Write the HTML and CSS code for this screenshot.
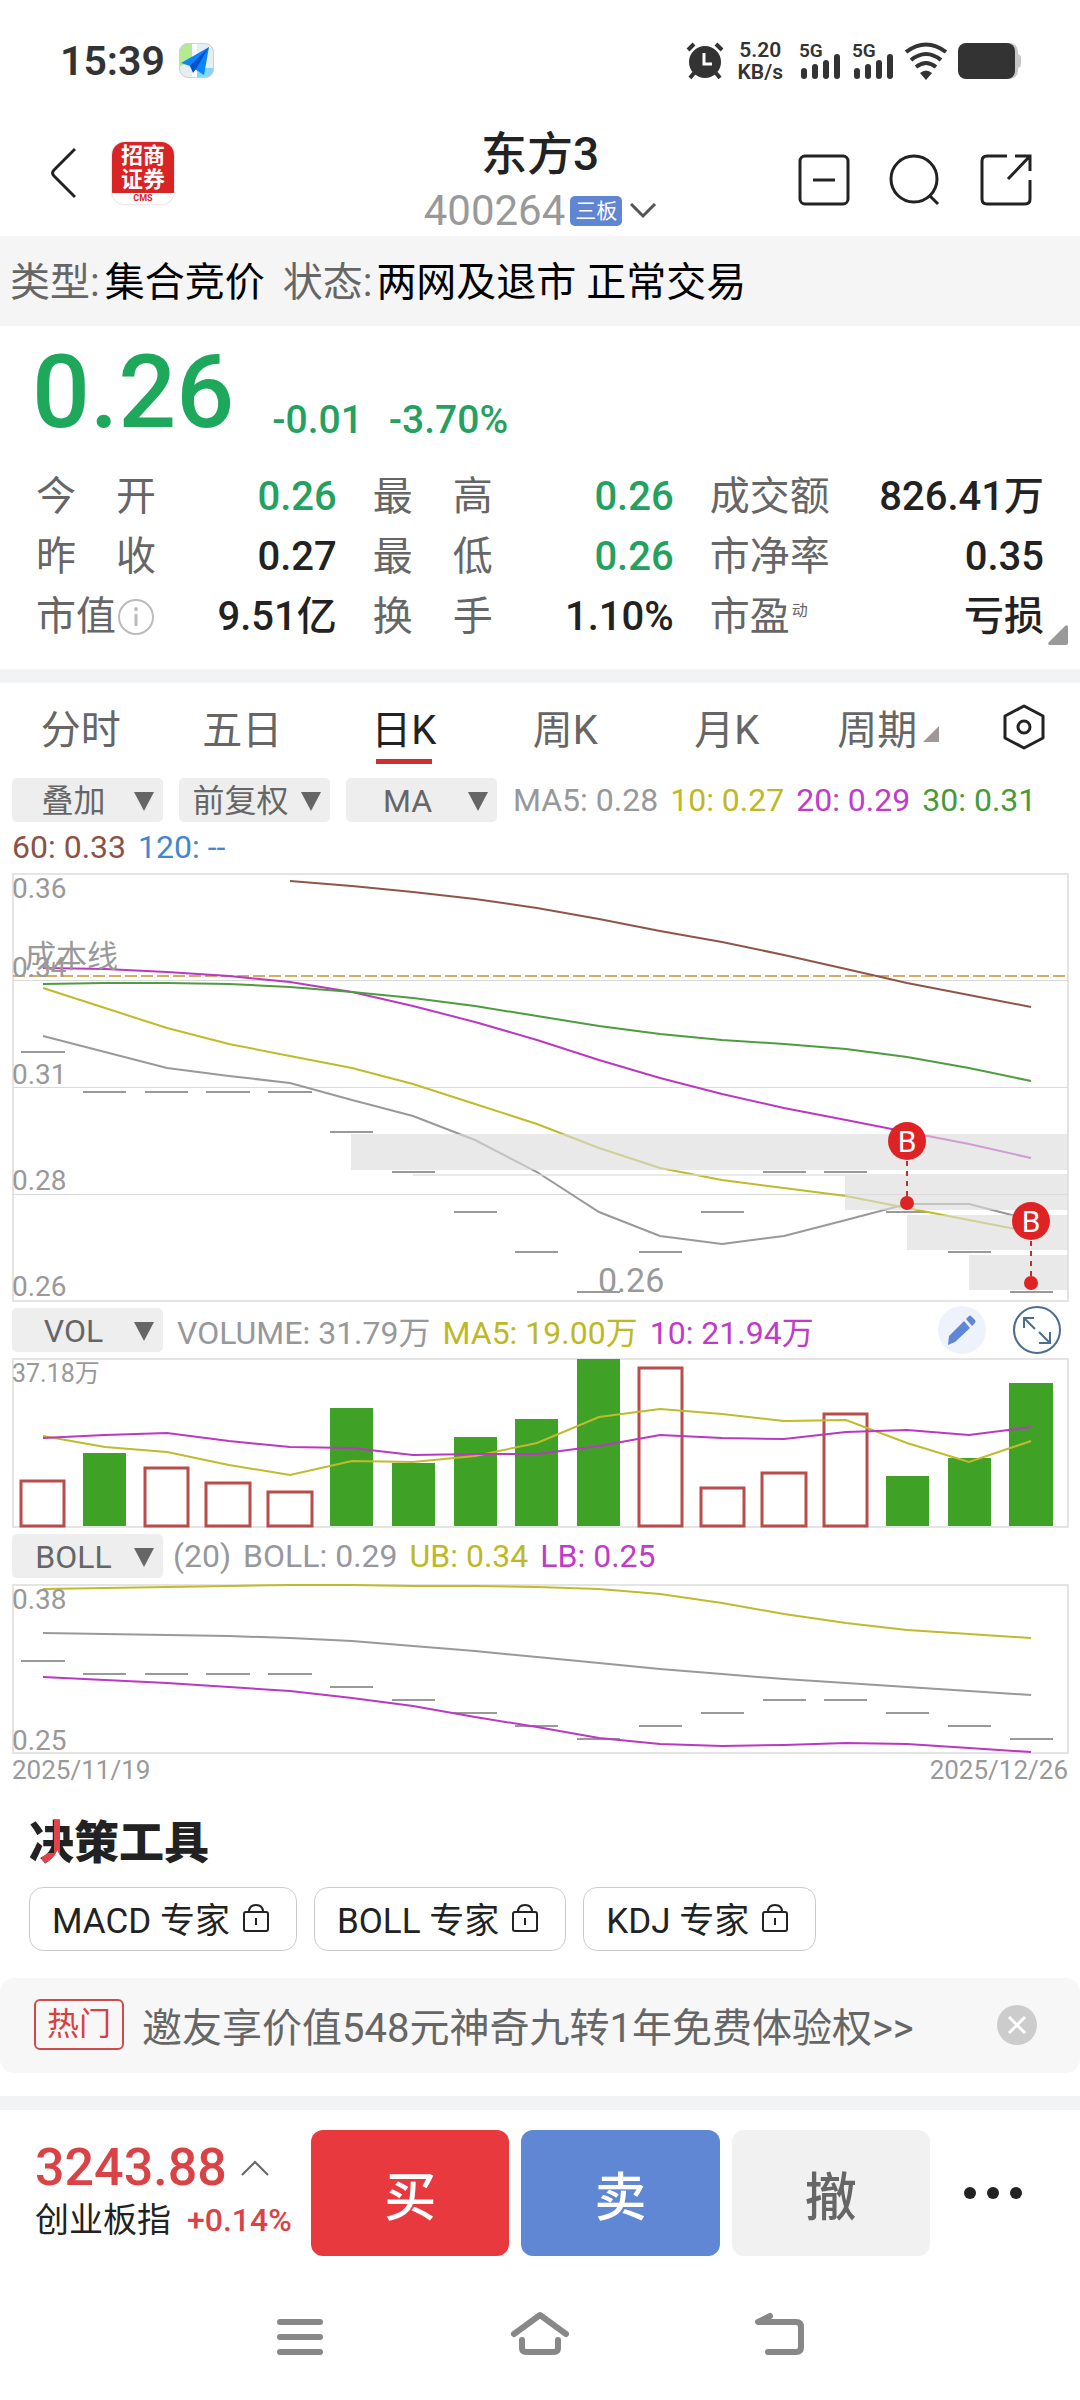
FILE: index.html
```html
<!DOCTYPE html>
<html lang="zh-CN">
<head>
<meta charset="utf-8">
<meta name="viewport" content="width=device-width, initial-scale=1">
<title>东方3 400264</title>
<link rel="stylesheet" href="styles.css">
</head>
<body>
<div class="statusbar">
  <span class="clock">15:39</span>
  <svg class="map-app" width="36" height="36" viewBox="0 0 36 36">
    <defs><clipPath id="appClip"><rect width="35" height="35" rx="9"/></clipPath></defs>
    <g clip-path="url(#appClip)">
      <rect width="36" height="36" fill="#e6eef3"/>
      <path d="M0 0H13V18L0 24Z" fill="#b4ea91"/>
      <path d="M13 0H18V36H13Z" fill="#fff"/>
      <path d="M18 25H36V36H18Z" fill="#7fd8fb"/>
    </g>
    <rect x=".5" y=".5" width="34" height="34" rx="9" fill="none" stroke="#c9d2d6"/>
    <path d="M30 4L2 20L11 23L25 32Z" fill="#0a84ff"/>
    <path d="M30 4L11 23L14 30L17 26Z" fill="#0450c8"/>
  </svg>
  <div class="status-right">
    <svg width="38" height="38" viewBox="0 0 38 38">
      <circle cx="19" cy="20" r="16" fill="#333"/>
      <path d="M2 8L8 2M36 8L30 2M8 31L4 36M30 31L34 36" stroke="#333" stroke-width="4" fill="none"/>
      <path d="M18 11V22H26" stroke="#fff" stroke-width="3" fill="none"/>
    </svg>
    <div class="netspeed"><span>5.20</span><span>KB/s</span></div>
    <div class="signal"><span>5G</span>
      <svg width="42" height="36" viewBox="0 0 42 36"><path d="M5 28V33M16 24V33M27 20V33M38 14V33" stroke="#333" stroke-width="6" stroke-linecap="round"/></svg>
    </div>
    <div class="signal"><span>5G</span>
      <svg width="42" height="36" viewBox="0 0 42 36"><path d="M5 28V33M16 24V33M27 20V33M38 14V33" stroke="#333" stroke-width="6" stroke-linecap="round"/></svg>
    </div>
    <svg class="wifi" width="44" height="38" viewBox="0 0 44 38">
      <path d="M2 10Q22 -5 42 10M7 18Q22 6 37 18M12 25Q22 17 32 25" fill="none" stroke="#333" stroke-width="4"/>
      <path d="M16 31Q22 26 28 31L22 38Z" fill="#333"/>
    </svg>
    <svg width="64" height="36" viewBox="0 0 64 36">
      <path d="M50 0Q60 0 60 9V11Q63 12 63 15V21Q63 24 60 25V27Q60 36 50 36Z" fill="#c8c8c8"/>
      <rect width="57" height="36" rx="8" fill="#333"/>
    </svg>
  </div>
</div>

<header class="header">
  <div class="header-left">
    <button class="icon-btn" aria-label="返回"><svg width="28" height="52" viewBox="0 0 28 52"><path d="M27 2L6 23Q3 26 6 29L27 50" fill="none" stroke="#222" stroke-width="3"/></svg></button>
    <div class="broker"><span>招商</span><span>证券</span><small>CMS</small></div>
  </div>
  <div class="stock">
    <h1>东方3</h1>
    <button class="stock-code">400264<span class="board">三板</span>
      <svg width="26" height="16" viewBox="0 0 26 16"><path d="M1 1L13 13L25 1" fill="none" stroke="#555" stroke-width="3"/></svg>
    </button>
  </div>
  <div class="header-right">
    <button class="icon-btn" aria-label="删除自选"><svg width="52" height="52" viewBox="0 0 52 52"><rect x="2" y="2" width="48" height="48" rx="5" fill="none" stroke="#222" stroke-width="3"/><path d="M15 26H37" stroke="#222" stroke-width="3"/></svg></button>
    <button class="icon-btn" aria-label="搜索"><svg width="52" height="52" viewBox="0 0 52 52"><circle cx="25" cy="25" r="23" fill="none" stroke="#222" stroke-width="3"/><path d="M40 41L49 50" stroke="#222" stroke-width="3"/></svg></button>
    <button class="icon-btn" aria-label="分享"><svg width="52" height="52" viewBox="0 0 52 52"><path d="M27 2H7Q2 2 2 7V45Q2 50 7 50H45Q50 50 50 45V26M35 2H50V17M50 2L28 25" fill="none" stroke="#222" stroke-width="3"/></svg></button>
  </div>
</header>

<div class="typebar"><span class="muted">类型:</span><span class="type-value">集合竞价</span><span class="muted">状态:</span><span class="state-value">两网及退市 正常交易</span></div>

<section class="quote">
  <div class="price-row"><span class="price">0.26</span><span class="change">-0.01</span><span class="change">-3.70%</span></div>
  <dl class="stats">
    <div><dt>今开</dt><dd class="down">0.26</dd></div>
    <div><dt>最高</dt><dd class="down">0.26</dd></div>
    <div><dt>成交额</dt><dd>826.41万</dd></div>
    <div><dt>昨收</dt><dd>0.27</dd></div>
    <div><dt>最低</dt><dd class="down">0.26</dd></div>
    <div><dt>市净率</dt><dd>0.35</dd></div>
    <div><dt class="tight">市值<svg width="38" height="38" viewBox="0 0 38 38"><circle cx="20" cy="19" r="17" fill="none" stroke="#bbb" stroke-width="2"/><circle cx="20" cy="11" r="2" fill="#bbb"/><path d="M20 16V28" stroke="#bbb" stroke-width="3"/></svg></dt><dd>9.51亿</dd></div>
    <div><dt>换手</dt><dd>1.10%</dd></div>
    <div><dt class="tight">市盈<small>动</small></dt><dd>亏损</dd></div>
  </dl>
  <button class="expand" aria-label="展开更多"><svg width="20" height="20" viewBox="0 0 20 20"><path d="M20 2V18Q20 20 18 20H2Q-1 20 1 17L17 1Q20 -1 20 2Z" fill="#999"/></svg></button>
</section>

<nav class="tabs">
  <button>分时</button>
  <button>五日</button>
  <button class="active">日K</button>
  <button>周K</button>
  <button>月K</button>
  <button>周期<svg width="16" height="16" viewBox="0 0 16 16"><path d="M16 0V16H0Z" fill="#a09896"/></svg></button>
  <button aria-label="图表设置"><svg class="gear" width="42" height="46" viewBox="0 0 42 46"><path d="M21 2L40 12V34L21 44L2 34V12Z" fill="none" stroke="#222" stroke-width="3" stroke-linejoin="round"/><circle cx="21" cy="23" r="6" fill="none" stroke="#222" stroke-width="3"/></svg></button>
</nav>

<section class="charts">
  <div class="toolbar">
    <span class="chip"><select aria-label="叠加"><option>叠加</option></select></span>
    <span class="chip"><select aria-label="复权方式"><option>前复权</option></select></span>
    <span class="chip"><select aria-label="主图指标"><option>MA</option></select></span>
    <div class="legend"><span class="c-gray">MA5: 0.28</span><span class="c-yellow">10: 0.27</span><span class="c-purple">20: 0.29</span><span class="c-green">30: 0.31</span></div>
  </div>
  <div class="legend legend-second"><span class="c-brown">60: 0.33</span><span class="c-blue">120: --</span></div>

  <svg class="chart" viewBox="0 872 1080 431">
    <rect class="frame" x="13" y="874" width="1055" height="427"/>
    <path class="grid" d="M13 980H1068M13 1087H1068M13 1194H1068"/>
    <path class="cost" d="M13 976H1066"/>
    <path class="tick" d="M21 1052h44M83 1092h43M145 1092h43M206 1092h44M268 1092h44M330 1132h43M392 1172h43M454 1212h43M515 1252h43M577 1292h43M639 1252h43M701 1212h43M763 1172h43M824 1172h43M886 1212h43M948 1252h43M1010 1292h43"/>
    <polyline class="line s-gray" points="43,1036 105,1052 167,1068 229,1076 290,1083 352,1100 413,1116 475,1140 537,1172 599,1212 660,1236 722,1244 784,1236 846,1220 907,1204 969,1204 1031,1220"/>
    <polyline class="line s-yellow" points="43,988 105,1008 167,1028 229,1044 290,1056 352,1068 413,1084 475,1104 537,1124 599,1148 660,1168 722,1180 784,1188 846,1196 907,1208 969,1220 1031,1232"/>
    <polyline class="line s-purple" points="43,968 105,969 167,972 229,976 290,982 352,992 413,1006 475,1022 537,1040 599,1060 660,1078 722,1094 784,1108 846,1120 907,1132 969,1144 1031,1158"/>
    <polyline class="line s-green" points="43,984 105,983 167,983 229,984 290,987 352,992 413,998 475,1006 537,1016 599,1026 660,1034 722,1040 784,1044 846,1049 907,1057 969,1068 1031,1081"/>
    <polyline class="line s-brown" points="290,881 352,886 413,892 475,899 537,908 599,919 660,931 722,942 784,955 846,969 907,983 969,995 1031,1007"/>
    <g class="gap-zone">
      <path d="M351 1134H1068V1170H351ZM413 1174H1068V1176H413ZM845 1176H1068V1210H845ZM907 1215H1068V1250H907ZM969 1255H1068V1290H969Z"/>
    </g>
    <g class="axis">
      <text x="12" y="898">0.36</text><text x="12" y="977">0.34</text><text x="12" y="1084">0.31</text><text x="12" y="1190">0.28</text><text x="12" y="1296">0.26</text>
    </g>
    <text class="cost-label" x="25" y="967">成本线</text>
    <text class="low-label" x="598" y="1292">0.26</text>
    <g class="buy-mark">
      <path d="M907 1161V1197M1031 1241V1277"/>
      <circle cx="907" cy="1203" r="7"/><circle cx="1031" cy="1283" r="7"/>
      <circle cx="907" cy="1141" r="19"/><circle cx="1031" cy="1221" r="19"/>
      <text x="907" y="1152">B</text><text x="1031" y="1232">B</text>
    </g>
  </svg>

  <div class="toolbar toolbar-sub">
    <span class="chip"><select aria-label="副图指标一"><option>VOL</option></select></span>
    <div class="legend"><span class="c-gray">VOLUME: 31.79万</span><span class="c-yellow">MA5: 19.00万</span><span class="c-purple">10: 21.94万</span></div>
    <div class="chart-tools">
      <button class="icon-btn" aria-label="画线"><svg width="50" height="50" viewBox="0 0 50 50"><circle cx="25" cy="25" r="24" fill="#edf2fb"/><path d="M12 31L27 16L33 23L18 37L11 40ZM29 14L32 11Q33 10 34 11L38 15Q39 16 38 18L35 21Z" fill="#5f87d6"/></svg></button>
      <button class="icon-btn" aria-label="全屏"><svg width="50" height="50" viewBox="0 0 50 50"><g fill="none" stroke="#4a6d90" stroke-width="2"><circle cx="25" cy="25" r="23"/><path d="M12 23V13H22M12 13L23 24M38 27V38H27M38 38L27 27"/></g></svg></button>
    </div>
  </div>
  <svg class="chart" viewBox="0 1358 1080 171">
    <rect class="frame" x="13" y="1359" width="1055" height="168"/>
    <path class="vol-down" d="M83 1453h43v73h-43ZM330 1408h43v118h-43ZM392 1463h43v63h-43ZM454 1437h43v89h-43ZM515 1419h43v107h-43ZM577 1359h43v167h-43ZM886 1476h43v50h-43ZM948 1458h43v68h-43ZM1009 1383h44v143h-44Z"/>
    <path class="vol-up" d="M21 1481h43v45h-43ZM145 1468h43v58h-43ZM206 1483h44v43h-44ZM268 1492h44v34h-44ZM639 1368h43v158h-43ZM701 1488h43v38h-43ZM762 1473h44v53h-44ZM824 1414h43v112h-43Z"/>
    <polyline class="line s-yellow" points="43,1436 105,1447 167,1452 229,1465 290,1475 352,1461 413,1462 475,1456 537,1443 599,1417 660,1409 722,1414 784,1421 846,1420 907,1443 969,1462 1031,1441"/>
    <polyline class="line s-purple" points="43,1438 105,1435 167,1433 229,1441 290,1447 352,1448 413,1455 475,1454 537,1454 599,1446 660,1435 722,1438 784,1439 846,1432 907,1430 969,1435 1031,1427"/>
    <g class="axis axis-vol"><text x="12" y="1382">37.18万</text></g>
  </svg>

  <div class="toolbar toolbar-sub">
    <span class="chip"><select aria-label="副图指标二"><option>BOLL</option></select></span>
    <div class="legend legend-boll"><span class="c-gray">(20)</span><span class="c-gray">BOLL: 0.29</span><span class="c-yellow">UB: 0.34</span><span class="c-purple">LB: 0.25</span></div>
  </div>
  <svg class="chart" viewBox="0 1584 1080 171">
    <rect class="frame" x="13" y="1585" width="1055" height="168"/>
    <path class="tick" d="M21 1661h44M83 1674h43M145 1674h43M206 1674h44M268 1674h44M330 1687h43M392 1700h43M454 1713h43M515 1726h43M577 1739h43M639 1726h43M701 1713h43M763 1700h43M824 1700h43M886 1713h43M948 1726h43M1010 1739h43"/>
    <polyline class="line s-yellow" points="43,1589 105,1588 167,1587 229,1586 290,1585 352,1585 413,1586 475,1586 537,1587 599,1589 660,1594 722,1603 784,1614 846,1623 907,1630 969,1634 1031,1638"/>
    <polyline class="line s-gray" points="43,1633 105,1634 167,1635 229,1636 290,1638 352,1641 413,1646 475,1651 537,1657 599,1663 660,1669 722,1674 784,1679 846,1683 907,1687 969,1691 1031,1695"/>
    <polyline class="line s-purple" points="43,1677 105,1680 167,1683 229,1687 290,1691 352,1698 413,1706 475,1717 537,1727 599,1738 660,1744 722,1746 784,1745 846,1743 907,1744 969,1748 1031,1752"/>
    <g class="axis"><text x="12" y="1609">0.38</text><text x="12" y="1750">0.25</text></g>
  </svg>
  <div class="dates"><span>2025/11/19</span><span>2025/12/26</span></div>
</section>

<section class="tools">
  <h2><span>决</span>策工具</h2>
  <div class="experts">
    <button>MACD 专家<svg width="28" height="30" viewBox="0 0 28 30"><path d="M4 9H24Q26 9 26 11V26Q26 28 24 28H4Q2 28 2 26V11Q2 9 4 9ZM7 9Q7 2 14 2Q21 2 21 9M14 15V22" fill="none" stroke="#222" stroke-width="2"/></svg></button>
    <button>BOLL 专家<svg width="28" height="30" viewBox="0 0 28 30"><path d="M4 9H24Q26 9 26 11V26Q26 28 24 28H4Q2 28 2 26V11Q2 9 4 9ZM7 9Q7 2 14 2Q21 2 21 9M14 15V22" fill="none" stroke="#222" stroke-width="2"/></svg></button>
    <button>KDJ 专家<svg width="28" height="30" viewBox="0 0 28 30"><path d="M4 9H24Q26 9 26 11V26Q26 28 24 28H4Q2 28 2 26V11Q2 9 4 9ZM7 9Q7 2 14 2Q21 2 21 9M14 15V22" fill="none" stroke="#222" stroke-width="2"/></svg></button>
  </div>
</section>

<div class="promo">
  <span class="hot">热门</span>
  <a href="#">邀友享价值548元神奇九转1年免费体验权&gt;&gt;</a>
  <button class="icon-btn" aria-label="关闭"><svg width="42" height="42" viewBox="0 0 42 42"><circle cx="21" cy="21" r="20" fill="#ccc"/><path d="M13 13L29 29M29 13L13 29" stroke="#fff" stroke-width="3"/></svg></button>
</div>

<footer class="tradebar">
  <div class="index">
    <div class="index-value">3243.88<svg width="28" height="16" viewBox="0 0 28 16"><path d="M1 15L14 2L27 15" fill="none" stroke="#666" stroke-width="2"/></svg></div>
    <div class="index-name">创业板指<span>+0.14%</span></div>
  </div>
  <div class="trade-actions">
    <button class="buy">买</button>
    <button class="sell">卖</button>
    <button class="cancel">撤</button>
  </div>
  <button class="icon-btn more" aria-label="更多"><svg width="58" height="12" viewBox="0 0 58 12"><circle cx="6" cy="6" r="6" fill="#222"/><circle cx="29" cy="6" r="6" fill="#222"/><circle cx="52" cy="6" r="6" fill="#222"/></svg></button>
</footer>

<nav class="sysnav">
  <button class="icon-btn" aria-label="多任务"><svg width="48" height="50" viewBox="0 0 48 50"><path d="M4 13H44M4 28H44M4 43H44" stroke="#888" stroke-width="6" stroke-linecap="round"/></svg></button>
  <button class="icon-btn" aria-label="主页"><svg width="60" height="50" viewBox="0 0 60 50"><path d="M4 25L30 6L56 25M12 31V39Q12 43 16 43H44Q48 43 48 39V31" fill="none" stroke="#888" stroke-width="6" stroke-linecap="round" stroke-linejoin="round"/></svg></button>
  <button class="icon-btn" aria-label="后退"><svg width="52" height="50" viewBox="0 0 52 50"><path d="M16 7L4 13H42Q47 13 47 18V38Q47 43 42 43H14" fill="none" stroke="#888" stroke-width="6" stroke-linecap="round" stroke-linejoin="round"/></svg></button>
</nav>
</body>
</html>
```
FILE: styles.css
```css
* { box-sizing: border-box; }

body {
  margin: 0;
  background: #fff;
  color: #222;
  font-family: Roboto, "Noto Sans CJK SC", sans-serif;
  font-size: 40px;
}

button, select {
  margin: 0;
  padding: 0;
  border: 0;
  background: none;
  color: inherit;
  font: inherit;
}

svg { display: block; flex: none; }
h1, h2, dl, dd { margin: 0; }

.icon-btn { display: flex; align-items: center; justify-content: center; }

/* system status bar */
.statusbar {
  display: flex;
  align-items: center;
  height: 122px;
  padding: 0 58px 0 60px;
  color: #333;
}
.clock { font-size: 41px; font-weight: 600; line-height: 48px; }
.map-app { margin-left: 14px; }
.status-right { display: flex; align-items: center; margin-left: auto; gap: 10px; }
.netspeed {
  display: flex;
  flex-direction: column;
  align-items: center;
  margin: 0 6px 0 4px;
  font-size: 21px;
  font-weight: 600;
  line-height: 20px;
}
.netspeed span:first-child { margin-bottom: 2px; }
.signal { position: relative; width: 43px; }
.signal span {
  position: absolute;
  top: -2px;
  left: 0;
  font-size: 19px;
  font-weight: 600;
  line-height: 20px;
}
.wifi { margin-left: -1px; }

/* title bar */
.header {
  display: grid;
  grid-template-columns: 1fr auto 1fr;
  align-items: center;
  height: 114px;
  padding: 0 48px;
}
.header-left { display: flex; align-items: center; gap: 36px; padding-bottom: 14px; }
.broker {
  display: flex;
  flex-direction: column;
  align-items: center;
  width: 62px;
  height: 62px;
  padding-top: 2px;
  border-radius: 13px;
  background: linear-gradient(#d82424 51px, #fff 51px);
  box-shadow: 0 0 2px #aaa;
  color: #fff;
  font-size: 22px;
  font-weight: 700;
  line-height: 24px;
}
.broker small { color: #d82424; font-size: 9px; line-height: 12px; }
.stock { display: flex; flex-direction: column; align-items: center; padding-top: 2px; }
.stock h1 { font-size: 46px; font-weight: 500; line-height: 60px; }
.stock-code {
  display: flex;
  align-items: center;
  color: #999;
  font-size: 42px;
  line-height: 54px;
}
.board {
  margin: 0 8px 0 5px;
  padding: 0 5px;
  border-radius: 5px;
  background: #6085d3;
  color: #fff;
  font-size: 21px;
  line-height: 30px;
}
.header-right { display: flex; justify-content: flex-end; gap: 39px; }

.typebar {
  padding: 3px 10px 0;
  background: #f5f5f5;
  color: #000;
  line-height: 87px;
}
.muted { color: #666; }
.type-value { margin: 0 18px 0 5px; }
.state-value { margin-left: 4px; }

/* quote */
.quote { position: relative; padding: 14px 36px 22px; border-bottom: 14px solid #f2f3f5; }
.price-row { display: flex; align-items: flex-end; color: #24a160; font-weight: 500; }
.price { margin: 0 38px 0 -4px; color: #1da85c; font-size: 102px; line-height: 104px; }
.change { margin-right: 26px; font-size: 39px; line-height: 48px; }
.stats {
  display: grid;
  grid-template-columns: 9fr 9fr 10fr;
  column-gap: 36px;
  margin-top: 23px;
  line-height: 60px;
}
.stats div { display: flex; justify-content: space-between; }
.stats dt { width: 120px; color: #666; text-align-last: justify; }
.stats .tight { display: flex; align-items: center; }
.stats small { align-self: flex-start; margin-left: 2px; font-size: 16px; line-height: 48px; }
.stats dd { font-weight: 500; }
.stats .down { color: #24a160; }
.expand { position: absolute; right: 12px; bottom: 24px; }

/* period tabs */
.tabs {
  display: grid;
  grid-template-columns: repeat(6, 16fr) 11fr;
  height: 90px;
  padding-bottom: 2px;
  color: #666;
}
.tabs button {
  position: relative;
  display: flex;
  align-items: center;
  justify-content: center;
}
.tabs button svg:not(.gear) { margin: 14px 0 0 6px; }
.tabs .active { color: #222; }
.tabs .active::after {
  position: absolute;
  bottom: 7px;
  width: 56px;
  height: 5px;
  background: #cc3030;
  content: "";
}

/* charts */
.toolbar { display: flex; align-items: center; gap: 16px; height: 49px; padding: 5px 12px 0; }
.toolbar-sub { gap: 14px; padding-right: 18px; margin-bottom: 6px; }
.chip { position: relative; }
.chip::after {
  position: absolute;
  top: 14px;
  right: 9px;
  border: 10px solid transparent;
  border-top: 19px solid #666;
  border-bottom: 0;
  content: "";
  pointer-events: none;
}
.chip select {
  display: block;
  width: 151px;
  height: 44px;
  padding: 2px 28px 0 0;
  border-radius: 5px;
  background: #eee;
  color: #666;
  font-size: 32px;
  text-align: center;
  text-align-last: center;
  appearance: none;
}
.legend { display: flex; gap: 12px; font-size: 32px; white-space: nowrap; }
.legend-second { height: 50px; padding: 0 12px; line-height: 50px; }
.legend-boll { margin-left: -4px; }
.c-gray { color: #97989c; }
.c-yellow { color: #bdb926; }
.c-purple { color: #c03cc8; }
.c-green { color: #479a37; }
.c-brown { color: #8c5145; }
.c-blue { color: #4585d0; }
.chart-tools { display: flex; gap: 25px; margin-left: auto; }

.chart { width: 100%; height: auto; overflow: visible; }
.frame { fill: none; stroke: #e4e4e4; stroke-width: 2; }
.grid { fill: none; stroke: #d9d9d9; stroke-width: 1; shape-rendering: crispEdges; }
.cost { stroke: #d3ad66; stroke-width: 2; stroke-dasharray: 12 4; }
.tick { fill: none; stroke: #999; stroke-width: 2; }
.line { fill: none; stroke-width: 2; }
.s-gray { stroke: #999; }
.s-yellow { stroke: #bfbb2c; }
.s-purple { stroke: #bb38c2; }
.s-green { stroke: #4d9c3e; }
.s-brown { stroke: #8f5549; }
.gap-zone { fill: #dcdcdc; fill-opacity: .62; }
.axis { fill: #999; font-size: 28px; }
.axis-vol { font-size: 25px; }
.cost-label { fill: #999; font-size: 31px; }
.low-label { fill: #999; font-size: 34px; }
.buy-mark { fill: #dd2323; }
.buy-mark path { fill: none; stroke: #cc2a2a; stroke-width: 2; stroke-dasharray: 5 5; }
.buy-mark text { fill: #fff; font-size: 30px; text-anchor: middle; }
.vol-down { fill: #40a127; }
.vol-up { fill: none; stroke: #b94d4b; stroke-width: 3; }
.dates {
  display: flex;
  justify-content: space-between;
  padding: 0 12px;
  color: #999;
  font-size: 26px;
  line-height: 30px;
}

/* decision tools */
.tools { padding: 31px 29px 27px; }
.tools h2 { font-size: 45px; font-weight: 900; line-height: 56px; }
.tools h2 span {
  background:
    linear-gradient(#e0444a, #e0444a) 25px 0 / 6px 100% no-repeat,
    linear-gradient(#e0444a, #e0444a) 13px 36px / 16px 20px no-repeat,
    #222;
  background-clip: text;
  color: transparent;
}
.experts { display: flex; gap: 17px; margin-top: 15px; }
.experts button {
  display: flex;
  align-items: center;
  gap: 12px;
  height: 64px;
  padding: 0 26px 3px 22px;
  border: 1px solid #ccc;
  border-radius: 14px;
  font-size: 35px;
}

.promo {
  display: flex;
  align-items: center;
  height: 95px;
  margin-bottom: 23px;
  padding: 0 42px 2px 34px;
  border-radius: 14px;
  background: #f7f7f7;
}
.hot {
  width: 90px;
  border: 2px solid #d04a4c;
  border-radius: 6px;
  color: #d8403f;
  font-size: 32px;
  line-height: 47px;
  text-align: center;
}
.promo a { flex: 1; margin-left: 18px; color: #666; text-decoration: none; }

/* trading footer */
.tradebar {
  display: grid;
  grid-template-columns: 311px 1fr 150px;
  align-items: center;
  padding-top: 20px;
  border-top: 14px solid #f2f3f5;
}
.index { padding-left: 35px; }
.index-value {
  display: flex;
  align-items: center;
  gap: 14px;
  color: #d94345;
  font-size: 52px;
  font-weight: 500;
  line-height: 54px;
}
.index-name { display: flex; font-size: 34px; line-height: 50px; }
.index-name span { margin-left: 16px; color: #d94345; font-size: 32px; font-weight: 500; }
.trade-actions { display: grid; grid-template-columns: repeat(3, 1fr); gap: 12px; }
.trade-actions button {
  height: 126px;
  border-radius: 12px;
  color: #fff;
  font-size: 52px;
  font-weight: 500;
}
.trade-actions .buy { background: #e8393e; }
.trade-actions .sell { background: #5f87d3; }
.trade-actions .cancel { background: #f1f1f1; color: #666; }
.more { padding-right: 24px; }

.sysnav {
  display: grid;
  grid-template-columns: repeat(3, 1fr);
  justify-items: center;
  padding: 53px 180px 41px;
}
```
